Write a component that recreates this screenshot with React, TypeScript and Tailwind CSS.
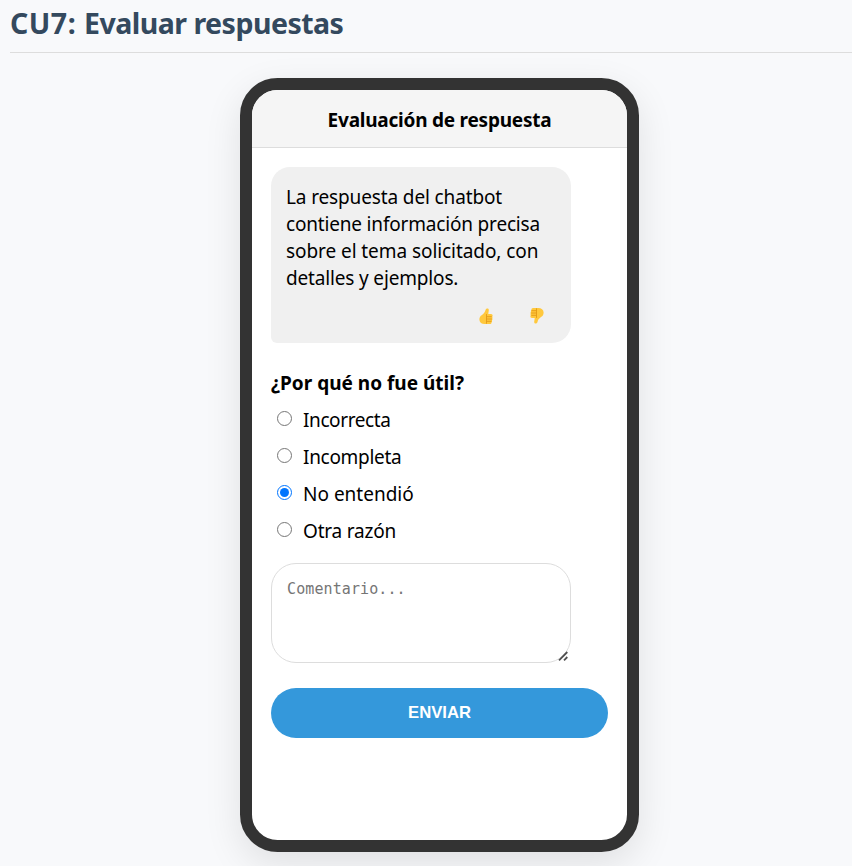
import { useState } from 'react';

const REASONS = [
  { label: 'Incorrecta', tracking: 'tracking-[-0.4px]' },
  { label: 'Incompleta', tracking: 'tracking-[-0.3px]' },
  { label: 'No entendió', tracking: 'tracking-[0px]' },
  { label: 'Otra razón', tracking: 'tracking-[-0.2px]' },
];

function Thumb({ down = false }: { down?: boolean }) {
  return (
    <svg viewBox="0 0 14 17" className={down ? 'block h-[17px] w-[14px] rotate-180' : 'block h-[17px] w-[14px]'}>
      <path
        d="M7.4.7C8.4.1 9.7.5 9.8 1.7c.1 1.5-.5 3-.5 4.4H12c1.1 0 1.7.8 1.6 1.7 0 .5-.2.9-.5 1.2.5.4.6 1.2.2 1.8.3.6.2 1.3-.3 1.8.2.6 0 1.2-.4 1.6.1 1-.6 1.9-1.6 1.9H5.6C2.7 16.1 .5 14.4.4 11.8.3 9.5 1.2 7.9 3 6.9 5.2 5.4 6.1 3.8 6.5 2.1 6.7 1.5 6.9 1 7.4.7Z"
        fill="#ffc83d"
      />
      <path d="M7.5 6.1v9.6M7.5 8.7h5.2M7.5 11h5.4M7.5 13.3h4.9" fill="none" stroke="#e39a16" strokeWidth=".9" />
    </svg>
  );
}

export default function App() {
  const [reason, setReason] = useState('No entendió');
  return (
    <div className="h-[866px] overflow-hidden bg-[#f8f9fb] pl-[10px] font-['Noto_Sans',sans-serif] text-black">
      <h2 className="h-[53px] border-b border-[#dddddd] pt-[3px] text-[28.5px] leading-[41px] font-bold whitespace-nowrap text-[#34495e]">
        <span className="tracking-[0.5px]">CU7: </span>
        <span className="tracking-[-0.52px]">Evaluar respuestas</span>
      </h2>
      <main className="mt-[25px] ml-[230px] h-[774px] w-[399px] overflow-hidden rounded-[37.5px] border-[12px] border-[#333333] bg-white shadow-[0_12px_37px_rgba(0,0,0,0.1)]">
        <header className="h-[58px] border-b border-[#dddddd] bg-[#f5f5f5] pt-[17px] text-center text-[19px] leading-[27px] font-bold">
          <span className="tracking-[-0.23px]">Evaluación de respuesta</span>
        </header>
        <section className="px-[19px] pt-[19px]">
          <div className="h-[176px] w-[300px] rounded-[19px] rounded-bl-[6px] bg-[#f0f0f0] px-[15px] pt-[17px]">
            <p className="text-[19px] leading-[27px] whitespace-nowrap">
              <span className="tracking-[-0.13px]">La respuesta del chatbot</span>
              <br />
              <span className="tracking-[-0.18px]">contiene información precisa</span>
              <br />
              <span className="tracking-[-0.07px]">sobre el tema solicitado, con</span>
              <br />
              <span className="tracking-[-0.16px]">detalles y ejemplos.</span>
            </p>
            <div className="mt-[15px] flex justify-end gap-[37px] pr-[12px]">
              <button aria-label="Útil" className="pt-[1px]"><Thumb /></button>
              <button aria-label="No útil" className="pb-[1px]"><Thumb down /></button>
            </div>
          </div>
          <h3 className="mt-[27px] text-[19px] leading-[27px] font-bold whitespace-nowrap">¿Por qué no fue útil?</h3>
          <div className="mt-[10px] flex flex-col gap-[10px]">
            {REASONS.map(({ label, tracking }) => (
              <label key={label} className="flex h-[27px] pl-[6px] text-[19px] leading-[27px] whitespace-nowrap">
                <input
                  type="radio"
                  name="reason"
                  checked={reason === label}
                  onChange={() => setReason(label)}
                  className="mt-[4px] mr-[11px] h-[15px] w-[15px] accent-[#0075ff]"
                />
                <span className={tracking}>{label}</span>
              </label>
            ))}
          </div>
          <div className="relative mt-[18px] h-[100px] w-[300px]">
            <textarea
              placeholder="Comentario..."
              className="block h-full w-full resize-none rounded-[25px] border border-[#dddddd] bg-white p-[15px] font-['DejaVu_Sans_Mono',monospace] text-[15px] leading-[20px] tracking-[0.1px] placeholder:text-[#757575]"
            />
            <svg viewBox="0 0 10 10" className="pointer-events-none absolute right-[3px] bottom-[2px] h-[10px] w-[10px]">
              <path d="M1 9.3 9.3 1M6 9.3l3.3-3.3" fill="none" stroke="#505050" strokeWidth="1.8" />
            </svg>
          </div>
          <button className="mt-[25px] h-[50px] w-full rounded-[25px] bg-[#3498db] pb-[2px] font-['Liberation_Sans',Arial,sans-serif] text-[16.67px] font-bold text-white">
            ENVIAR
          </button>
        </section>
      </main>
    </div>
  );
}
